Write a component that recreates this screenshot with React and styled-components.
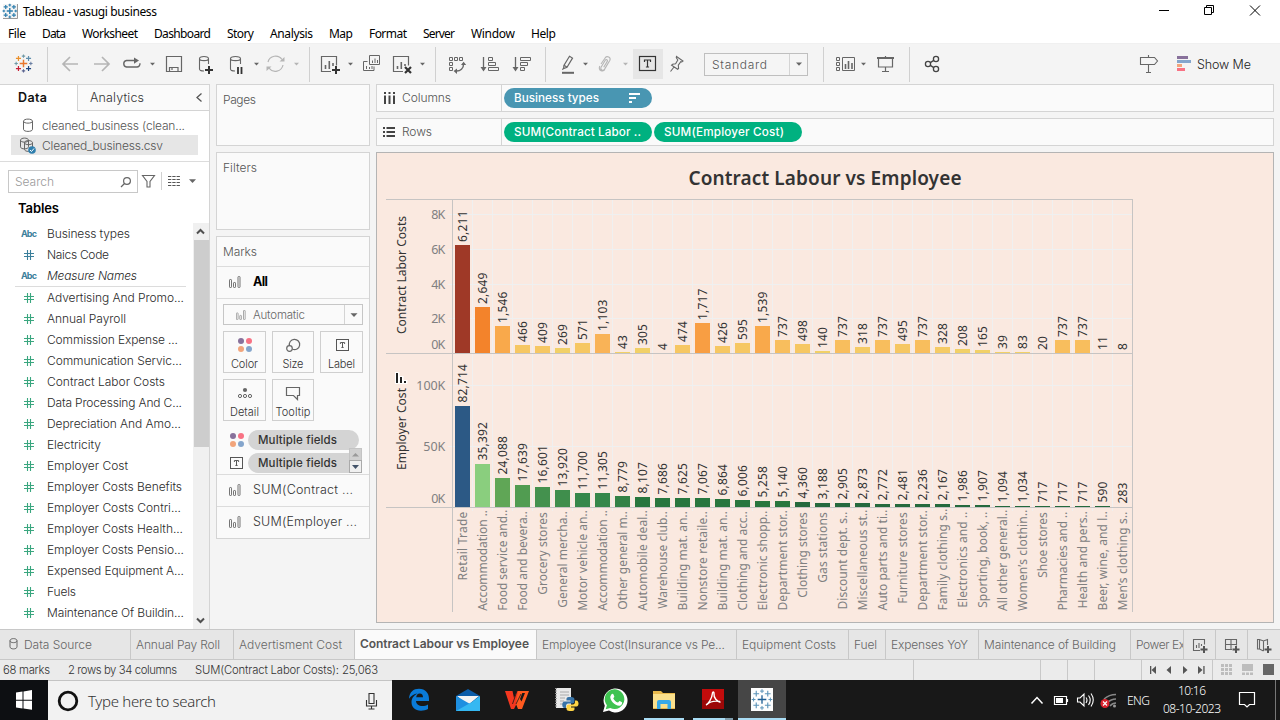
import React, { useLayoutEffect, useRef, useState } from "react";
import styled, { createGlobalStyle, css } from "styled-components";

const UI = `Inter, "Noto Sans", sans-serif`;
const SYS = `"Noto Sans", "Open Sans", sans-serif`;

const Global = createGlobalStyle`
  * { box-sizing: border-box; }
  html, body { margin: 0; padding: 0; overflow: hidden; background: #f4f4f4; }
  body { font-family: ${UI}; font-size: 12px; font-weight: 350; color: #333; }
  svg { display: block; flex: none; }
`;

/* ---------- text that is tracked to a fixed measure ---------- */
const FitSpan = styled.span`
  display: inline-block;
  white-space: pre;
  flex: none;
`;
function Fit({ w, children, ...rest }) {
  const ref = useRef(null);
  const [ls, setLs] = useState(0);
  useLayoutEffect(() => {
    const el = ref.current;
    el.style.letterSpacing = "0px";
    const natural = el.getBoundingClientRect().width;
    const spacing = (w - natural) / Math.max(1, el.textContent.length - 1);
    el.style.letterSpacing = spacing + "px";
    setLs(spacing);
  }, [w]);
  return (
    <FitSpan ref={ref} style={{ letterSpacing: ls + "px", marginRight: -ls + "px" }} {...rest}>
      {children}
    </FitSpan>
  );
}

/* ---------- drawing helpers ---------- */
const Art = ({ x, y, w, h, children }) => (
  <svg width={w} height={h} viewBox={`${x} ${y} ${w} ${h}`} fill="none">
    {children}
  </svg>
);
const Tool = ({ x, w, children }) => (
  <Art x={x} y={46} w={w} h={36}>
    {children}
  </Art>
);
const Caret = ({ x, y = 64, c = "#666", s = 2.5 }) => (
  <path d={`M${x - s} ${y - s / 2}h${2 * s}l${-s} ${s + 0.3}z`} fill={c} />
);
const Plus = ({ x, y, r, c, sw = 1 }) => (
  <path d={`M${x - r} ${y}h${2 * r}M${x} ${y - r}v${2 * r}`} stroke={c} strokeWidth={sw} />
);
const TableauMark = ({ x, y, k = 1, colors, sw = 1.1 }) => {
  const [mid, n, ne, e, se, s, so, w, nw] = colors;
  return (
    <g>
      <Plus x={x} y={y} r={3.6 * k} c={mid} sw={sw * 1.2} />
      <Plus x={x} y={y - 7 * k} r={1.6 * k} c={n} sw={sw * 0.9} />
      <Plus x={x + 4.8 * k} y={y - 4.8 * k} r={2.4 * k} c={ne} sw={sw} />
      <Plus x={x + 7 * k} y={y} r={1.6 * k} c={e} sw={sw * 0.9} />
      <Plus x={x + 4.8 * k} y={y + 4.8 * k} r={2.4 * k} c={se} sw={sw} />
      <Plus x={x} y={y + 7 * k} r={1.6 * k} c={s} sw={sw * 0.9} />
      <Plus x={x - 4.8 * k} y={y + 4.8 * k} r={2.4 * k} c={so} sw={sw} />
      <Plus x={x - 7 * k} y={y} r={1.6 * k} c={w} sw={sw * 0.9} />
      <Plus x={x - 4.8 * k} y={y - 4.8 * k} r={2.4 * k} c={nw} sw={sw} />
    </g>
  );
};
const blues = Array(9).fill("#2f7fae");
const Dots = ({ x, y, d = 8, r = 3 }) => (
  <g>
    <circle cx={x} cy={y} r={r} fill="#88719b" />
    <circle cx={x + d} cy={y} r={r} fill="#f87284" />
    <circle cx={x} cy={y + d} r={r} fill="#f2a57c" />
    <circle cx={x + d} cy={y + d} r={r} fill="#84a5cc" />
  </g>
);
const TBox = ({ x, y, w, h, c = "#555", sw = 1, k = 1 }) => (
  <g stroke={c} strokeWidth={sw}>
    <rect x={x + 0.5} y={y + 0.5} width={w - 1} height={h - 1} />
    <path
      d={`M${x + w / 2 - 3 * k} ${y + h / 2 - 1.5 * k}v${-2 * k}h${6 * k}v${2 * k}M${x + w / 2} ${y + h / 2 - 3.5 * k}v${7 * k}M${x + w / 2 - 1.6 * k} ${y + h / 2 + 3.5 * k}h${3.2 * k}`}
    />
  </g>
);
const BarsGlyph = ({ x = 0, y = 0, c = "#757575" }) => (
  <g stroke={c} fill="none">
    <rect x={x + 0.5} y={y + 3.5} width="2" height="8" rx="0.6" />
    <rect x={x + 4.5} y={y + 6.5} width="2" height="5" rx="0.6" />
    <rect x={x + 9} y={y + 0.5} width="2" height="11" rx="0.6" />
  </g>
);
const Cyl = ({ x, y, w, h, c = "#666" }) => (
  <path
    d={`M${x} ${y + 2.2}c0 -2.8 ${w} -2.8 ${w} 0v${h - 4.4}c0 2.8 ${-w} 2.8 ${-w} 0zM${x} ${y + 2.2}c0 2.6 ${w} 2.6 ${w} 0`}
    stroke={c}
  />
);

/* ---------- window frame ---------- */
const Screen = styled.div`
  width: 1280px;
  height: 720px;
  display: flex;
  flex-direction: column;
  overflow: hidden;
`;
const TitleBar = styled.header`
  height: 24px;
  background: #fff;
  display: flex;
  align-items: center;
  font: 12px/24px ${SYS};
  color: #000;
`;
const WindowButtons = styled.div`
  margin-left: auto;
`;
const MenuBar = styled.nav`
  height: 19px;
  background: #fff;
  display: flex;
  gap: 16px;
  padding-left: 8px;
  font: 12px/19px ${SYS};
  color: #000;
`;
const ToolBar = styled.div`
  height: 41px;
  padding: 2px 0 2px;
  background: #f4f4f4;
  border-top: 1px solid #f0f0f0;
  display: flex;
  align-items: center;
`;
const ToolSep = styled.i`
  width: 1px;
  height: 35px;
  background: #d0d0d0;
  flex: none;
`;
const ActiveTool = styled.div`
  width: 30px;
  height: 30px;
  background: #e6e6e6;
  display: flex;
  align-items: center;
`;
const FitSelect = styled.div`
  width: 104px;
  height: 23px;
  border: 1px solid #bfbfbf;
  display: flex;
  align-items: center;
  padding-left: 7px;
  margin-right: 15px;
  background: #f5f5f5;
  color: #555;
`;
const SelectArrow = styled.span`
  margin-left: auto;
  width: 18px;
  height: 100%;
  border-left: 1px solid #d4d4d4;
  display: flex;
  align-items: center;
  justify-content: center;
`;
const ToolSpace = styled.div`
  flex: 1;
`;
const ShowMe = styled.span`
  width: 83px;
  color: #222;
  font-size: 12.5px;
`;

/* ---------- workspace ---------- */
const Work = styled.div`
  height: 545px;
  display: flex;
  background: #f4f4f4;
`;
const DataPane = styled.aside`
  width: 210px;
  background: #fff;
  border: solid #d4d4d4;
  border-width: 1px 1px 0 0;
  display: flex;
  flex-direction: column;
`;
const PaneTabs = styled.div`
  height: 26px;
  display: flex;
`;
const PaneTab = styled.div`
  display: flex;
  align-items: center;
  font-size: 12.5px;
  ${(p) =>
    p.$active
      ? css`
          width: 77px;
          padding-left: 18px;
          padding-bottom: 1px;
          font-weight: 600;
          color: #111;
        `
      : css`
          flex: 1;
          padding: 0 6px 0 12px;
          justify-content: space-between;
          background: #fafafa;
          border: solid #d4d4d4;
          border-width: 0 0 1px 1px;
          color: #333;
        `}
`;
const Sources = styled.div`
  height: 51px;
  padding: 4px 11px 0;
  border-bottom: 1px solid #dcdcdc;
`;
const Source = styled.div`
  height: 20px;
  display: flex;
  align-items: center;
  gap: 5px;
  padding-left: 8px;
  color: #555;
  background: ${(p) => (p.$on ? "#e6e6e6" : "transparent")};
`;
const SearchRow = styled.div`
  display: flex;
  align-items: center;
  padding: 8px 0 0 8px;
`;
const SearchBox = styled.div`
  width: 130px;
  height: 23px;
  border: 1px solid #c8c8c8;
  display: flex;
  align-items: center;
  justify-content: space-between;
  padding: 0 5px 0 6px;
  color: #9a9a9a;
`;
const TablesHead = styled.div`
  height: 30px;
  padding: 0 0 0 18px;
  display: flex;
  align-items: center;
  font-size: 13px;
  font-weight: 600;
  color: #000;
`;
const FieldArea = styled.div`
  flex: 1;
  display: flex;
  min-height: 0;
`;
const Fields = styled.div`
  flex: 1;
  overflow: hidden;
`;
const Field = styled.div`
  height: 21px;
  display: flex;
  align-items: center;
  padding-bottom: 1px;
  color: #2a2a2a;
  font-style: ${(p) => (p.$italic ? "italic" : "normal")};
`;
const FieldType = styled.span`
  width: 47px;
  padding: 1px 0 0 ${(p) => (p.$abc ? 21 : 24)}px;
  font: 700 9px ${UI};
  color: #3b7f9b;
`;
const FieldRule = styled.div`
  height: 1px;
  margin: 0 7px 0 15px;
  background: #dcdcdc;
`;
const ScrollBar = styled.div`
  width: 16px;
  background: #f0f0f0;
  display: flex;
  flex-direction: column;
  align-items: center;
`;
const Thumb = styled.div`
  width: 15px;
  height: 207px;
  background: #cdcdcd;
`;
const ScrollGap = styled.div`
  flex: 1;
`;

const Cards = styled.section`
  width: 154px;
  margin-left: 6px;
  display: flex;
  flex-direction: column;
  gap: 6px;
`;
const Card = styled.div`
  height: ${(p) => p.$h}px;
  border: 1px solid #d4d4d4;
  background: #fafafa;
  color: #555;
`;
const CardTitle = styled.div`
  padding-left: 6px;
  height: 29px;
  display: flex;
  align-items: center;
`;
const MarkRow = styled.div`
  height: 32px;
  border-top: 1px solid #dcdcdc;
  display: flex;
  align-items: center;
  gap: 12px;
  padding: 0 0 2px 12px;
  font-size: 12.5px;
  font-weight: ${(p) => (p.$bold ? 700 : 350)};
  color: ${(p) => (p.$bold ? "#000" : "#333")};
`;
const MarkBody = styled.div`
  height: 176px;
  border-top: 1px solid #dcdcdc;
  padding: 5px 6px 0;
`;
const MarkType = styled.div`
  width: 140px;
  height: 21px;
  border: 1px solid #c6c6c6;
  display: flex;
  align-items: center;
  gap: 7px;
  padding-left: 12px;
  color: #666;
  font-size: 11.5px;
`;
const MarkGrid = styled.div`
  display: grid;
  grid-template-columns: 43px 42px 43px;
  grid-auto-rows: 42px;
  gap: 6px;
  margin-top: 6px;
`;
const MarkButton = styled.div`
  border: 1px solid #cfcfcf;
  display: flex;
  flex-direction: column;
  align-items: center;
  justify-content: space-between;
  padding: 4px 0 1px;
  font-size: 11px;
  color: #333;
`;
const PillList = styled.div`
  margin-top: 9px;
  display: flex;
  position: relative;
`;
const PillRows = styled.div`
  display: flex;
  flex-direction: column;
  gap: 3px;
`;
const PillRow = styled.div`
  display: flex;
  align-items: center;
`;
const GreyPill = styled.div`
  width: 111px;
  height: 20px;
  border-radius: 10px;
  padding: 0 0 1px 10px;
  background: #d4d4d4;
  color: #333;
  font-size: 11.5px;
  font-weight: 500;
  display: flex;
  align-items: center;
`;
const MiniScroll = styled.div`
  position: absolute;
  right: 0;
  bottom: 0;
`;

const Main = styled.main`
  width: 898px;
  margin-left: 6px;
  display: flex;
  flex-direction: column;
  gap: 6px;
`;
const Shelf = styled.div`
  height: 28px;
  border: 1px solid #d4d4d4;
  background: #fafafa;
  display: flex;
  align-items: center;
`;
const ShelfName = styled.div`
  width: 125px;
  height: 100%;
  border-right: 1px solid #d4d4d4;
  padding: 0 0 1px 6px;
  display: flex;
  align-items: center;
  gap: 6px;
  color: #555;
`;
const Pill = styled.div`
  width: 148px;
  height: 20px;
  margin-left: 2px;
  padding: 0 11px 1px 10px;
  border-radius: 10px;
  display: flex;
  align-items: center;
  justify-content: space-between;
  font-size: 11.7px;
  font-weight: 500;
  color: #fff;
  background: ${(p) => (p.$dim ? "#4996b2" : "#00b180")};
`;
const Sheet = styled.div`
  height: 471px;
  border: 1px solid #b4b4b4;
  background: #fae9e0;
`;

/* ---------- bottom bars ---------- */
const SheetTabs = styled.div`
  height: 31px;
  border: solid #c8c8c8;
  border-width: 1px 0;
  background: #e6e6e6;
  display: flex;
  overflow: hidden;
`;
const SheetTab = styled.div`
  width: ${(p) => p.$w}px;
  flex: none;
  overflow: hidden;
  padding-left: ${(p) => (p.$first ? 6 : 5)}px;
  border-left: ${(p) => (p.$first ? 0 : 1)}px solid #c8c8c8;
  display: flex;
  align-items: center;
  color: #666;
  gap: 5px;
  font-size: 12px;
  ${(p) =>
    p.$active &&
    css`
      background: #fafafa;
      font-weight: 600;
      color: #555;
      padding-bottom: 2px;
    `}
`;
const NewTab = styled.div`
  width: ${(p) => p.$w}px;
  border-left: 1px solid #c8c8c8;
  display: flex;
  align-items: center;
  justify-content: center;
`;
const StatusBar = styled.div`
  height: 20px;
  background: #ebebeb;
  display: flex;
  align-items: center;
  padding-left: 3px;
  gap: 18px;
  font-size: 11.3px;
  color: #333;
`;
const StatusEnd = styled.div`
  margin-left: auto;
  display: flex;
`;
const StatusCell = styled.div`
  width: ${(p) => p.$w}px;
  height: 20px;
  border-left: 1px solid #c8c8c8;
`;

const TaskBar = styled.footer`
  height: 40px;
  background: #181818;
  display: flex;
  font-family: ${SYS};
  color: #fff;
`;
const Start = styled.div`
  width: 48px;
  background: #0d0f12;
`;
const SearchTask = styled.div`
  width: 344px;
  background: #f2f2f2;
  border-top: 1px solid #c4c4c4;
  display: flex;
  align-items: center;
  color: #333;
  font-size: 15px;
`;
const Apps = styled.div`
  display: flex;
  padding-left: 3px;
`;
const AppSlot = styled.div`
  width: 48px;
  height: 40px;
  margin-right: 1px;
  display: flex;
  flex-direction: column;
  align-items: center;
  background: ${(p) => (p.$on ? "#464646" : "transparent")};
`;
const Underline = styled.i`
  display: block;
  width: ${(p) => p.$w}px;
  height: 2px;
  background: #a9dcf4;
  border-right: ${(p) => (p.$dim ? 8 : 0)}px solid #7f9dac;
`;
const Tray = styled.div`
  margin-left: auto;
  display: flex;
  align-items: center;
  font-size: 12px;
`;
const Clock = styled.div`
  width: 76px;
  padding-right: 6px;
  display: flex;
  flex-direction: column;
  align-items: center;
  line-height: 18px;
`;
const Lang = styled.div`
  width: 30px;
`;

/* ---------- data ---------- */
const menus = [
  ["File", 18], ["Data", 24], ["Worksheet", 56], ["Dashboard", 57], ["Story", 27], ["Analysis", 43],
  ["Map", 24], ["Format", 38], ["Server", 32], ["Window", 44], ["Help", 25],
];
const measures = [
  ["Advertising And Promo...", 137], ["Annual Payroll", 79], ["Commission Expense ...", 131],
  ["Communication Servic...", 135], ["Contract Labor Costs", 118], ["Data Processing And C...", 135],
  ["Depreciation And Amo...", 134], ["Electricity", 54], ["Employer Cost", 81],
  ["Employer Costs Benefits", 135], ["Employer Costs Contri...", 134], ["Employer Costs Health...", 136],
  ["Employer Costs Pensio...", 137], ["Expensed Equipment A...", 137], ["Fuels", 29],
  ["Maintenance Of Buildin...", 137],
];
/* label, its top and bottom on the axis, contractor cost, employer cost */
const industries = [
  ["Retail Trade", 511.7, 580, 6211, 82714],
  ["Accommodation ..", 510, 610.3, 2649, 35392],
  ["Food service and..", 509.5, 610.3, 1546, 24088],
  ["Food and bevera..", 511, 610.3, 466, 17639],
  ["Grocery stores", 512.3, 594.3, 409, 16601],
  ["General mercha..", 511, 607.3, 269, 13920],
  ["Motor vehicle an..", 510, 610.3, 571, 11700],
  ["Accommodation ..", 510, 610.3, 1103, 11305],
  ["Other general m..", 511, 609.3, 43, 8779],
  ["Automobile deal..", 510, 610.3, 305, 8107],
  ["Warehouse club..", 511, 608.3, 4, 7686],
  ["Building mat. an..", 511, 610, 474, 7625],
  ["Nonstore retaile..", 511, 610, 1717, 7067],
  ["Building mat. an..", 511, 610, 426, 6864],
  ["Clothing and acc..", 511, 610, 595, 6006],
  ["Electronic shopp..", 510.5, 610, 1539, 5258],
  ["Department stor..", 510, 610, 737, 5140],
  ["Clothing stores", 512.3, 597.3, 498, 4360],
  ["Gas stations", 512.3, 582.3, 140, 3188],
  ["Discount dept. s..", 511.5, 609, 737, 2905],
  ["Miscellaneous st..", 509.5, 610, 318, 2873],
  ["Auto parts and ti..", 509.5, 610, 737, 2772],
  ["Furniture stores", 512.3, 603.3, 495, 2481],
  ["Department stor..", 510, 610, 737, 2236],
  ["Family clothing s..", 508.5, 610, 328, 2167],
  ["Electronics and ..", 511.5, 607.3, 208, 1986],
  ["Sporting, book, ..", 511.5, 607.3, 165, 1907],
  ["All other general..", 509.5, 610.5, 39, 1094],
  ["Women’s clothin..", 509.5, 610.5, 83, 1034],
  ["Shoe stores", 512.3, 577.3, 20, 717],
  ["Pharmacies and ..", 511.5, 610, 737, 717],
  ["Health and pers..", 511, 608, 737, 717],
  ["Beer, wine, and l..", 511, 610, 11, 590],
  ["Men’s clothing s..", 511.5, 610, 8, 283],
];
const warm = (v) =>
  v > 6000 ? "#9f3927" : v > 2000 ? "#f3832b" : v > 1600 ? "#f89e43" : v > 1200 ? "#f9a94b"
  : v > 1000 ? "#f9b357" : v > 700 ? "#f8be5d" : v > 350 ? "#f6c762" : v > 310 ? "#f5cb65" : "#f1d067";
const cool = (v) =>
  v > 80000 ? "#2c5985" : v > 30000 ? "#8ace7e" : v > 20000 ? "#60a656" : v > 17000 ? "#519c51"
  : v > 16000 ? "#44914e" : v > 13000 ? "#3f8e4c" : v > 11000 ? "#35874a" : v > 8500 ? "#338146"
  : v > 5000 ? "#27763e" : "#24693d";

/* ---------- chart ---------- */
const Up = ({ x, y, len, c = "#333", size = 12, children }) => (
  <text
    transform={`translate(${x} ${y}) rotate(-90)`}
    textLength={len}
    fontSize={size}
    fill={c}
  >
    {children}
  </text>
);
const numLen = (s) => s.replace(",", "").length * 7 + (s.includes(",") ? 3.6 : 0) - 0.2;

function Chart() {
  const grid = "#eff0f0";
  const rule = "#c6c4c3";
  return (
    <svg width="896" height="469" viewBox="377 153 896 469" fontFamily={SYS} fontWeight="400">
      <text x="688.5" y="185" textLength="273" fontSize="19" fontWeight="600" fill="#333">
        Contract Labour vs Employee
      </text>
      <g fill={grid}>
        {industries.slice(1).map((_, i) => (
          <rect key={i} x={472 + 20 * i} y="200" width="1" height="311" />
        ))}
        {[214, 249, 284, 318, 385, 446].map((y) => (
          <rect key={y} x="448" y={y} width="684" height="1" />
        ))}
      </g>
      {industries.map(([name, top, bottom, a, b], i) => {
        const ha = Math.round(a * 0.01739);
        const hb = Math.round(b * 0.001222);
        const sa = a.toLocaleString("en-US");
        const sb = b.toLocaleString("en-US");
        const x = 455 + 20 * i;
        return (
          <g key={i}>
            <rect x={x} y={353 - ha} width="15" height={ha} fill={warm(a)} />
            <rect x={x} y={507 - hb} width="15" height={hb} fill={cool(b)} />
            <Up x={x + 12} y={350 - ha} len={numLen(sa)}>{sa}</Up>
            <Up x={x + 12} y={503.5 - hb} len={numLen(sb)}>{sb}</Up>
            <Up x={x + 12} y={bottom + 0.5} len={bottom - top + 0.5} c="#808080">{name}</Up>
          </g>
        );
      })}
      <g fill={rule}>
        <rect x="386" y="199" width="747" height="1" />
        <rect x="386" y="353" width="747" height="1" />
        <rect x="386" y="507" width="747" height="1" />
        <rect x="452" y="199" width="1" height="413" />
        <rect x="1132" y="199" width="1" height="413" />
      </g>
      <Up x={406} y={334} len={118}>Contract Labor Costs</Up>
      <Up x={406} y={470} len={82}>Employer Cost</Up>
      <path d="M395 372h4.500v4h4v4h4v4h-12.500z" fill="#fff" />
      <path d="M396 373h2v10h-2zM400 377h2v6h-2zM404 381h2v2h-2z" fill="#222" />
      <g fill="#808080" fontSize="12.5" textAnchor="end">
        {[["8K", 218.5, 14], ["6K", 253.5, 14], ["4K", 288.5, 14], ["2K", 322.5, 14], ["0K", 349, 14],
          ["100K", 390, 29], ["50K", 451, 22], ["0K", 503, 14]].map(([t, y, l]) => (
          <text key={y} x="445.3" y={y} textLength={l}>{t}</text>
        ))}
      </g>
    </svg>
  );
}

/* ---------- sections ---------- */
function Tools() {
  const g = "#666";
  const l = "#b5b5b5";
  return (
    <ToolBar>
      <Tool x={0} w={47}>
        <TableauMark x={23.5} y={63.5} k={1.05} sw={1.2}
          colors={["#e8762d", "#7099a6", "#5f8fae", "#6a7fa3", "#1f447e", "#5b6591", "#c72037", "#7099a6", "#eb912c"]} />
      </Tool>
      <ToolSep />
      <Tool x={48} w={38}><path d="M78 64h-15M70 57l-7 7 7 7" stroke={l} strokeWidth="1.7" /></Tool>
      <Tool x={86} w={30}><path d="M94 64h15M102 57l7 7 -7 7" stroke={l} strokeWidth="1.7" /></Tool>
      <Tool x={116} w={42}>
        <path d="M134 60.5h-7.500a3.300 3.300 0 0 0 0 6.500h10a3 3 0 0 0 3.300 -3.800" stroke={g} strokeWidth="1.4" />
        <path d="M134 57.500l5 3 -5 3.200z" fill={g} />
        <Caret x={152.5} />
      </Tool>
      <Tool x={158} w={32}>
        <path d="M166.500 56.500h15v15h-15zM169.500 71.500v-4h8.500v4M172 70v-2" stroke={g} strokeWidth="1.2" />
      </Tool>
      <Tool x={190} w={32}>
        <path d="M208.500 64v-5.300c0-3-9-3-9 0v10.300c0 1.400 2 2 4.500 2M199.500 58.700c0 2.600 9 2.600 9 0" stroke={g} strokeWidth="1.1" />
        <Plus x={209} y={70} r={4} c="#333" sw={2} />
      </Tool>
      <Tool x={222} w={42}>
        <path d="M240.500 64v-5.300c0-3-10-3-10 0v10.300c0 1.400 2 2 4.500 2M230.500 58.700c0 2.600 10 2.600 10 0" stroke={g} strokeWidth="1.1" />
        <path d="M238 67v7M241.500 67v7" stroke="#333" strokeWidth="1.8" />
        <Caret x={256.5} />
      </Tool>
      <Tool x={264} w={45}>
        <path d="M268 62a7.800 7.800 0 0 1 14-2.500M283 65a7.800 7.800 0 0 1 -14 3" stroke={l} strokeWidth="1.2" />
        <path d="M284.500 57v4.500h-5zM266.500 71v-4.500h5z" fill={l} />
        <Caret x={296.5} c={l} />
      </Tool>
      <ToolSep />
      <Tool x={310} w={48}>
        <path d="M331 71.500h-9.500v-15h15v9" stroke={g} strokeWidth="1.2" />
        <path d="M325.500 69v-4M329.300 69v-8M333 66v-3" stroke={g} strokeWidth="1.6" />
        <Plus x={336} y={70} r={4} c="#333" sw={2} />
        <Caret x={350.500} />
      </Tool>
      <Tool x={358} w={28}>
        <path d="M369.500 55.500h10v9h-10zM367.500 61.500h-4v9h10.500v-4M366.500 69v-3M369.500 69v-2M372 69v-3M372.500 63v-2.500M375 63v-4.500M377.500 63v-3" stroke={g} />
      </Tool>
      <Tool x={386} w={49}>
        <path d="M403 71.500h-9.500v-15h15v9" stroke={g} strokeWidth="1.2" />
        <path d="M397.500 69v-3M401.300 69v-7M405 66v-2" stroke={g} strokeWidth="1.6" />
        <path d="M405 67l6 6M411 67l-6 6" stroke="#333" strokeWidth="2.200" />
        <Caret x={422.500} />
      </Tool>
      <ToolSep />
      <Tool x={436} w={38}>
        <path d="M449.500 57.500h3v3h-3zM454.500 57.500h3v3h-3zM459.500 57.500h3v3h-3zM449.500 62.500h3v3h-3zM449.500 67.500h3v3h-3z" stroke={g} />
        <path d="M463.500 63.500c.3 5-3 8-8 7.500" stroke={g} strokeWidth="1.400" />
        <path d="M461 65l2.600-3.300 2.600 3.300zM457 68.500l-3.400 2.500 3.400 3z" fill={g} />
      </Tool>
      <Tool x={474} w={32}>
        <path d="M483.500 57v12" stroke={g} strokeWidth="1.300" />
        <path d="M480.500 67h6l-3 4.500z" fill={g} />
        <path d="M488.500 57.500h4v3h-4zM488.500 62.500h7v3h-7zM488.500 67.500h10v3h-10z" stroke={g} />
      </Tool>
      <Tool x={506} w={39}>
        <path d="M515.500 57v12" stroke={g} strokeWidth="1.300" />
        <path d="M512.500 67h6l-3 4.500z" fill={g} />
        <path d="M520.500 57.500h10v3h-10zM520.500 62.500h7v3h-7zM520.500 67.500h4v3h-4z" stroke={g} />
      </Tool>
      <ToolSep />
      <Tool x={546} w={47}>
        <path d="M569.500 56.300l3 1.800 -5.500 9.200 -3.400 1.300 .3-3.200zM564.100 65.200l3 2M563.500 68.500l-1.200 1.200" stroke={g} strokeWidth="1.200" />
        <path d="M562 72.800h12" stroke={g} strokeWidth="2" />
        <Caret x={585.5} />
      </Tool>
      <Tool x={593} w={40}>
        <path d="M601 64l4.300-6.300c1.800-2.400 5.800-.2 4.600 2.600l-5.300 8.800c-1.500 2.200-4.600.600-3.700-1.700l4.400-7.200c1-1.300 2.700-.3 2 1.200l-3.600 5.800M599.800 66c-1 1.800-.5 4 1.300 4.700 1.600.600 3 .1 3.800-1.200" stroke={l} strokeWidth="1.100" />
        <Caret x={625.500} c={l} />
      </Tool>
      <ActiveTool>
        <Tool x={633} w={30}><TBox x={639} y={56} w={17} h={15} c="#333" sw={1.200} k={1} /></Tool>
      </ActiveTool>
      <Tool x={663} w={41}>
        <path d="M676.500 56.500l6.500 4.500 -1.200 1 -1-.3 -2.500 3.500 .300 3.300 -1 .8 -6-4.200 1-.8 3 -.5 2.200-3.800 -1.500-2.300zM674 67l-3.500 4.500" stroke={g} strokeWidth="1.100" />
      </Tool>
      <FitSelect>
        <Fit w={55}>Standard</Fit>
        <SelectArrow><Art x={0} y={0} w={10} h={8}><Caret x={5} y={4} s={3} /></Art></SelectArrow>
      </FitSelect>
      <ToolSep />
      <Tool x={824} w={46}>
        <path d="M836.500 57.500h3v3h-3zM836.500 62.500h3v3h-3zM836.500 67.500h3v3h-3zM842.500 57.500h12v13h-12z" stroke={g} />
        <path d="M845.500 69v-5M848.500 69v-8M852 69v-6" stroke={g} strokeWidth="1.600" />
        <Caret x={863.500} />
      </Tool>
      <Tool x={870} w={39}>
        <path d="M877 58h17" stroke={g} strokeWidth="2" />
        <path d="M885.500 56v2M878.500 58.500v8.500h14v-8.500M885.500 67v4.500M882 71.500h7" stroke={g} strokeWidth="1.200" />
      </Tool>
      <ToolSep />
      <Tool x={910} w={40}>
        <g stroke="#444" strokeWidth="1.300">
          <circle cx="928" cy="64" r="2.600" /><circle cx="936" cy="59" r="2.600" /><circle cx="936" cy="69" r="2.600" />
          <path d="M930.300 62.600l3.500-2.200M930.300 65.400l3.500 2.200" />
        </g>
      </Tool>
      <ToolSpace />
      <Tool x={1130} w={38}>
        <path d="M1140.500 57.500h14l3 3.500 -3 3.500h-14zM1148.500 55v2.500M1148.500 64.500v7.500M1146 72.500h5" stroke={g} strokeWidth="1.100" />
      </Tool>
      <Tool x={1168} w={29}>
        <path d="M1177 56h11v3h-11z" fill="#88719b" /><path d="M1177 60h14v3h-14z" fill="#84a5cc" />
        <path d="M1177 64h5v3h-5z" fill="#f2a57c" /><path d="M1177 68h8v3h-8z" fill="#f87284" />
      </Tool>
      <ShowMe><Fit w={54}>Show Me</Fit></ShowMe>
    </ToolBar>
  );
}

const Hash = ({ c }) => (
  <svg width="10" height="10" fill="none" stroke={c} strokeWidth="1.100">
    <path d="M0 3.500h10M0 6.500h10M3.500 0v10M6.500 0v10" />
  </svg>
);

function DataSide() {
  return (
    <DataPane>
      <PaneTabs>
        <PaneTab $active><Fit w={29}>Data</Fit></PaneTab>
        <PaneTab>
          <Fit w={54}>Analytics</Fit>
          <svg width="8" height="10" fill="none" stroke="#555" strokeWidth="1.300"><path d="M6.500 0.500L2 4.500l4.500 4" /></svg>
        </PaneTab>
      </PaneTabs>
      <Sources>
        <Source>
          <Art x={0} y={0} w={18} h={16}><Cyl x={4.5} y={2} w={9} h={12.500} /></Art>
          <Fit w={143}>cleaned_business (clean...</Fit>
        </Source>
        <Source $on>
          <Art x={0} y={0} w={18} h={18}>
            <Cyl x={1.500} y={2} w={8} h={11} /><Cyl x={5.500} y={4.500} w={8} h={11} />
            <circle cx="13" cy="14" r="3.800" fill="#2f7fae" /><path d="M11 14l1.500 1.500 2.500-3" stroke="#fff" />
          </Art>
          <Fit w={121}>Cleaned_business.csv</Fit>
        </Source>
      </Sources>
      <SearchRow>
        <SearchBox>
          <Fit w={39}>Search</Fit>
          <svg width="12" height="12" fill="none" stroke="#666" strokeWidth="1.200"><circle cx="7" cy="5" r="3.400" /><path d="M4.500 7.500L1 11" /></svg>
        </SearchBox>
        <Art x={138} y={170} w={70} h={23}>
          <path d="M142.500 175.500h12l-4.500 6v5.500h-3v-5.500z" stroke="#666" strokeWidth="1.100" />
          <path d="M161.500 172v18" stroke="#d0d0d0" />
          <path d="M168 176.500h12M168 179.500h12M168 182.500h12M168 185.500h12" stroke="#555" strokeWidth="1.200" strokeDasharray="3.300 1" />
          <Caret x={192.500} y={181} s={3.500} />
        </Art>
      </SearchRow>
      <TablesHead><Fit w={41}>Tables</Fit></TablesHead>
      <FieldArea>
        <Fields>
          <Field><FieldType $abc><Fit w={16}>Abc</Fit></FieldType><Fit w={83}>Business types</Fit></Field>
          <Field><FieldType><Hash c="#3b7f9b" /></FieldType><Fit w={62}>Naics Code</Fit></Field>
          <Field $italic><FieldType $abc><Fit w={16}>Abc</Fit></FieldType><Fit w={90}>Measure Names</Fit></Field>
          <FieldRule />
          {measures.map(([t, w]) => (
            <Field key={t}><FieldType><Hash c="#3aa67f" /></FieldType><Fit w={w}>{t}</Fit></Field>
          ))}
        </Fields>
        <ScrollBar>
          <svg width="16" height="17" fill="none" stroke="#505050" strokeWidth="2"><path d="M4 10.500l3.500-3.500 3.500 3.500" /></svg>
          <Thumb />
          <ScrollGap />
          <svg width="16" height="17" fill="none" stroke="#505050" strokeWidth="2"><path d="M4 6.500l3.500 3.500 3.500-3.500" /></svg>
        </ScrollBar>
      </FieldArea>
    </DataPane>
  );
}

function MarksColumn() {
  return (
    <Cards>
      <Card $h={62}><CardTitle><Fit w={33}>Pages</Fit></CardTitle></Card>
      <Card $h={78}><CardTitle><Fit w={34}>Filters</Fit></CardTitle></Card>
      <Card $h={303}>
        <CardTitle><Fit w={34}>Marks</Fit></CardTitle>
        <MarkRow $bold><svg width="12" height="12"><BarsGlyph /></svg><Fit w={15}>All</Fit></MarkRow>
        <MarkBody>
          <MarkType>
            <svg width="10" height="10" viewBox="0 0 12 12"><BarsGlyph c="#999" /></svg>
            <Fit w={52}>Automatic</Fit>
            <SelectArrow><Art x={0} y={0} w={10} h={8}><Caret x={5} y={4} s={3.500} /></Art></SelectArrow>
          </MarkType>
          <MarkGrid>
            <MarkButton>
              <Art x={0} y={0} w={18} h={18}><Dots x={5} y={5} /></Art><Fit w={27}>Color</Fit>
            </MarkButton>
            <MarkButton>
              <Art x={0} y={0} w={18} h={18}><path d="M5.500 10a5.200 5.200 0 1 1 3 3.300" stroke="#666" strokeWidth="1.200" /><circle cx="5.500" cy="12.500" r="2.800" stroke="#666" strokeWidth="1.200" /></Art>
              <Fit w={21}>Size</Fit>
            </MarkButton>
            <MarkButton>
              <Art x={0} y={0} w={18} h={18}><TBox x={3} y={3} w={13} h={12} k={0.700} /></Art><Fit w={27}>Label</Fit>
            </MarkButton>
            <MarkButton>
              <Art x={0} y={0} w={18} h={18}>
                <circle cx="9" cy="6" r="2.100" fill="#666" />
                <g stroke="#666"><circle cx="4" cy="12" r="1.600" /><circle cx="9" cy="12" r="1.600" /><circle cx="14" cy="12" r="1.600" /></g>
              </Art>
              <Fit w={29}>Detail</Fit>
            </MarkButton>
            <MarkButton>
              <Art x={0} y={0} w={18} h={18}><path d="M2.500 3.500h13v8h-2v4l-4-4h-7z" stroke="#666" strokeWidth="1.200" /></Art>
              <Fit w={35}>Tooltip</Fit>
            </MarkButton>
          </MarkGrid>
          <PillList>
            <PillRows>
              <PillRow><Art x={0} y={0} w={25} h={20}><Dots x={10} y={6} /></Art><GreyPill><Fit w={79}>Multiple fields</Fit></GreyPill></PillRow>
              <PillRow><Art x={0} y={0} w={25} h={20}><TBox x={7} y={4} w={13} h={12} k={0.700} /></Art><GreyPill><Fit w={79}>Multiple fields</Fit></GreyPill></PillRow>
            </PillRows>
            <MiniScroll>
              <svg width="14" height="25">
                <rect x="0.500" y="0.500" width="12" height="12" fill="#d0d0d0" stroke="#c4c4c4" /><rect x="0.500" y="12.500" width="12" height="12" fill="#f0f0f0" stroke="#aaa" />
                <path d="M3 8.500h7L6.500 5z" fill="#999" /><path d="M3 17h7l-3.500 4z" fill="#44546a" />
              </svg>
            </MiniScroll>
          </PillList>
        </MarkBody>
        <MarkRow><svg width="12" height="12"><BarsGlyph /></svg><Fit w={100}>SUM(Contract ...</Fit></MarkRow>
        <MarkRow><svg width="12" height="12"><BarsGlyph /></svg><Fit w={104}>SUM(Employer ...</Fit></MarkRow>
      </Card>
    </Cards>
  );
}

function Canvas() {
  return (
    <Main>
      <Shelf>
        <ShelfName>
          <svg width="13" height="12" fill="#444"><path d="M1 0h2v2H1zM5.500 0h2v2h-2zM10 0h2v2h-2zM1 3.500h2V12H1zM5.500 3.500h2V12h-2zM10 3.500h2V12h-2z" /></svg>
          <Fit w={49}>Columns</Fit>
        </ShelfName>
        <Pill $dim>
          <Fit w={85}>Business types</Fit>
          <svg width="18" height="10" fill="#fff"><path d="M7 0h11v2H7zM7 4h7v2H7zM7 8h3v2H7z" transform="translate(-1 0)" /></svg>
        </Pill>
      </Shelf>
      <Shelf>
        <ShelfName>
          <svg width="13" height="10" fill="#444"><path d="M0 0h2v2H0zM0 4h2v2H0zM0 8h2v2H0zM3.500 0H12v2H3.500zM3.500 4H12v2H3.500zM3.500 8H12v2H3.500z" /></svg>
          <Fit w={30}>Rows</Fit>
        </ShelfName>
        <Pill><Fit w={127}>SUM(Contract Labor ..</Fit></Pill>
        <Pill><Fit w={120}>SUM(Employer Cost)</Fit></Pill>
      </Shelf>
      <Sheet><Chart /></Sheet>
    </Main>
  );
}

const tabs = [
  ["Annual Pay Roll", 103, 84], ["Advertisment Cost", 121, 103], ["Contract Labour vs Employee", 182, 169],
  ["Employee Cost(Insurance vs Pe...", 200, 183], ["Equipment Costs", 112, 94], ["Fuel", 37, 23],
  ["Expenses YoY", 93, 77], ["Maintenance of Building", 152, 132], ["Power Exp", 53, 56],
];

const Python = () => (
  <g>
    <path d="M4 1h15v20H4z" fill="#e9e9e9" /><path d="M4 1v20" stroke="#999" strokeDasharray="1 1.500" strokeWidth="2" />
    <path d="M8 5h9M8 8h9M8 11h5M8 14h4M8 17h3" stroke="#aaa" />
    <path d="M18 10c-4 0-3.500 1.500-3.500 3.500h4v1h-6c-3 0-3 6.500 0 6.500h1.500v-2c0-2 1.500-2.500 3-2.500h3.500c1.500 0 2-1 2-2.500 0-3 0-4-4.500-4z" fill="#3873a6" />
    <path d="M19 24c4 0 3.500-1.500 3.500-3.500h-4v-1h6c3 0 2.500-6 0-6h-1.500v1.500c0 2-1.500 2.500-3 2.500h-3.500c-1.500 0-2 1-2 2.500 0 3 0 4 4.500 4z" fill="#ffd545" />
  </g>
);

function Taskbar() {
  return (
    <TaskBar>
      <Start>
        <Art x={0} y={680} w={48} h={40}>
          <path d="M16 692.300l6.500-1v8.200h-6.500zM23.500 691.100l8.500-1.300v9.700h-8.500zM16 700.500h6.500v7.700l-6.500-1zM23.500 700.500h8.500v9l-8.500-1.300z" transform="translate(0 .3)" fill="#fff" />
        </Art>
      </Start>
      <SearchTask>
        <Art x={48} y={681} w={40} h={38}><circle cx="68" cy="700" r="8.800" stroke="#111" strokeWidth="2.800" /></Art>
        <Fit w={128}>Type here to search</Fit>
        <ScrollGap />
        <Art x={352} y={681} w={40} h={38}>
          <path d="M369 692.500h5v10h-5zM366.500 699v6h10v-6M371.500 705v3M368.500 708h6" stroke="#333" strokeWidth="1.100" />
        </Art>
      </SearchTask>
      <Apps>
        <AppSlot>
          <Art x={0} y={0} w={28} h={38}>
            <path d="M4 19.500C4.500 12.500 8.500 9.500 14 9.500c6.500 0 10 4.500 10 10v2.300H11c.2 3.500 3 5 6.300 5 2.200 0 4-.6 5.700-1.600v4.600c-2 1.200-4.500 1.700-7 1.700C10 31.500 6.500 27.500 6.500 23c0-4.200 2.500-7.200 6-8.800-3.500.3-6.500 2.300-8.500 5.300zM11.200 18h6.800c0-2.200-1-3.800-3.300-3.800-2 0-3.200 1.700-3.500 3.800z" transform="translate(0 -.7)" fill="#0a7bd8" fillRule="evenodd" />
          </Art>
        </AppSlot>
        <AppSlot>
          <Art x={0} y={0} w={24} h={38}>
            <path d="M0 16L12 9l12 7v14H0z" fill="#0b5ca8" /><path d="M1 16h22l-11 9z" fill="#f3f3f3" />
            <path d="M0 16l15 8.500L10 31H0z" fill="#1e8fe0" /><path d="M24 16v15H0L16 22z" fill="#35b8f2" />
          </Art>
        </AppSlot>
        <AppSlot>
          <Art x={0} y={0} w={24} h={38}>
            <path d="M0 11h7.500l1.500 7 3-7h6l-9 18H6z" fill="#f4371f" /><path d="M13 11h5l-3 8 1.500 2.500L20 13h-3.500V11H24l-7 18h-4l-2-5z" fill="#ff5a1f" />
            <path d="M12 11L7.500 24M16 14l-5 10" stroke="#181818" strokeWidth="0.800" />
          </Art>
        </AppSlot>
        <AppSlot><Art x={0} y={-7} w={28} h={38}><Python /></Art></AppSlot>
        <AppSlot>
          <Art x={0} y={0} w={26} h={38}>
            <path d="M1 32l1.800-6.200A12 12 0 1 1 7 30.500z" fill="#fff" /><path d="M3.700 29.300l1.200-4A9.800 9.800 0 1 1 8.300 28z" fill="#3fc351" />
            <path d="M9.300 14.500c.8-1 1.800-.9 2.200 0l.8 2c.2.600-.9 1.500-1 1.900 1 2 2.500 3.300 4.600 4.200.600-.2 1.200-1.700 1.800-1.500l2.300 1.200c.4.300.1 3-2.300 3.500C13.500 26.500 7.500 20 8.300 16.500z" fill="#fff" />
          </Art>
        </AppSlot>
        <AppSlot>
          <Art x={0} y={0} w={24} h={38}>
            <path d="M1 11h8l2 2h12v16H1z" fill="#e9b94c" /><path d="M1 14h22v14H1z" fill="#fbe08c" />
            <path d="M5 29v-7q0-2 2-2h10q2 0 2 2v7h-3.500v-5h-7v5z" fill="#38a9e8" />
          </Art>
          <Underline $w={40} />
        </AppSlot>
        <AppSlot>
          <Art x={0} y={0} w={22} h={38}>
            <path d="M0 9h22v20H0z" fill="#c30c0c" /><path d="M0 20h22v9H0z" fill="#9c0808" />
            <path d="M4 25c2-1 6-6 6.500-12 .100-1.500 1.700-1.500 1.500.5C11.500 18 15 21.500 18.500 22.300M5 24.500c3-3 8-3.800 13-3" stroke="#fff" strokeWidth="1.400" />
          </Art>
          <Underline $w={40} $dim />
        </AppSlot>
        <AppSlot $on>
          <Art x={0} y={0} w={24} h={38}>
            <path d="M1 8h22v23H1z" fill="#fdfdfd" /><TableauMark x={12} y={19.500} k={1.200} colors={["#1f5f95", ...Array(8).fill("#5b93b8")]} />
          </Art>
          <Underline $w={48} />
        </AppSlot>
      </Apps>
      <Tray>
        <Art x={1025} y={680} w={102} h={40}>
          <path d="M1031.500 703.500l5.500-6 5.500 6" stroke="#fff" strokeWidth="1.500" />
          <path d="M1054.500 696.500h12v8h-12zM1067.500 699v3" stroke="#fff" strokeWidth="1.200" /><path d="M1056 698h7v5h-7z" fill="#fff" />
          <path d="M1077.500 698h2.500l4-4v12l-4-4h-2.500zM1086 697.500q2 2.500 0 5.500M1088.500 695.500q3.500 4.500 0 9.500M1091 693.500q4.500 6.500 0 13" stroke="#fff" strokeWidth="1.100" />
          <path d="M1104 699q5-4.500 12-4.500M1107 703q4-4 9-4M1110 706q2.500-3 6-3" stroke="#888" strokeWidth="1.400" />
          <circle cx="1114.500" cy="706" r="1.500" fill="#999" />
          <circle cx="1105" cy="703.500" r="4.500" fill="#d9232e" /><path d="M1103 701.500l4 4M1107 701.500l-4 4" stroke="#fff" strokeWidth="1.100" />
        </Art>
        <Lang><Fit w={23}>ENG</Fit></Lang>
        <Clock><Fit w={28}>10:16</Fit><Fit w={58}>08-10-2023</Fit></Clock>
        <Art x={1233} y={680} w={47} h={40}>
          <path d="M1239.500 692.500h15v12h-5l-2.500 2.500 -2.500-2.500h-5z" stroke="#fff" strokeWidth="1.200" />
          <path d="M1275.500 680v40" stroke="#777" />
        </Art>
      </Tray>
    </TaskBar>
  );
}

export default function App() {
  return (
    <Screen>
      <Global />
      <TitleBar>
        <Art x={0} y={0} w={23} h={24}>
          <path d="M3 4h15v15H3z" fill="#f4f4f4" /><path d="M3 18.500h14.500V4" stroke="#999" />
          <TableauMark x={9.800} y={11} k={0.850} sw={1.200} colors={blues} />
        </Art>
        <Fit w={134}>Tableau - vasugi business</Fit>
        <WindowButtons>
          <Art x={1150} y={0} w={130} h={24}>
            <path d="M1159 10.500h10M1204.500 7.500h7v7h-7zM1206.500 7.500v-2h7v7h-2M1250 5.500l10 10M1260 5.500l-10 10" stroke="#000" />
          </Art>
        </WindowButtons>
      </TitleBar>
      <MenuBar>{menus.map(([t, w]) => <Fit key={t} w={w}>{t}</Fit>)}</MenuBar>
      <Tools />
      <Work>
        <DataSide />
        <MarksColumn />
        <Canvas />
      </Work>
      <SheetTabs>
        <SheetTab $first $w={130}>
          <Art x={0} y={0} w={13} h={14}><Cyl x={4} y={0.500} w={7} h={10.500} /></Art>
          <Fit w={68}>Data Source</Fit>
        </SheetTab>
        {tabs.map(([t, w, tw]) => (
          <SheetTab key={t} $w={w} $active={t.startsWith("Contract")}><Fit w={tw}>{t}</Fit></SheetTab>
        ))}
        <NewTab $w={32}>
          <Art x={0} y={0} w={18} h={18}><path d="M9 14.500H2.500v-11h11v5M5.500 12V9M8 12V7M10.500 10V8" stroke="#666" strokeWidth="1.100" /><Plus x={13} y={13.500} r={3.500} c="#555" sw={2} /></Art>
        </NewTab>
        <NewTab $w={32}>
          <Art x={0} y={0} w={18} h={18}><path d="M9 13.500H2.500v-10h11v6M2.500 8.500h11M8 3.500v10" stroke="#666" strokeWidth="1.100" /><Plus x={13} y={13.500} r={3.500} c="#555" sw={2} /></Art>
        </NewTab>
        <NewTab $w={33}>
          <Art x={0} y={0} w={18} h={18}><path d="M12.500 9V3.500l-4 1.500 -4-1.500h-2v9.500h2l4 2M8.500 5v10M4.500 3.500v9.500M12.500 3.500" stroke="#666" strokeWidth="1.100" /><Plus x={13} y={13.500} r={3.500} c="#555" sw={2} /></Art>
        </NewTab>
      </SheetTabs>
      <StatusBar>
        <Fit w={47}>68 marks</Fit>
        <Fit w={109}>2 rows by 34 columns</Fit>
        <Fit w={183}>SUM(Contract Labor Costs): 25,063</Fit>
        <StatusEnd>
          <StatusCell $w={127} /><StatusCell $w={27} /><StatusCell $w={27} /><StatusCell $w={47} />
          <StatusCell $w={71}>
            <Art x={1142} y={660} w={70} h={20}>
              <path d="M1150 666h1.300v8h-1.300zM1156 666v8l-4.500-4zM1171 666v8l-4.500-4zM1183 666v8l4.500-4zM1198 666v8l4.500-4zM1203.300 666h1.300v8h-1.300z" fill="#555" />
            </Art>
          </StatusCell>
          <StatusCell $w={68}>
            <Art x={1213} y={660} w={67} h={20}>
              {[1221, 1225, 1229].map((x) => [664, 668, 672].map((y) => <rect key={x + "-" + y} x={x} y={y} width="3" height="3" fill="#bdbdbd" />))}
              <path d="M1242 664h11v7h-11zM1242 672.500h3v2.500h-3zM1246 672.500h3v2.500h-3zM1250 672.500h3v2.500h-3z" fill="#bdbdbd" />
              <path d="M1263 664h11v11h-11z" fill="#666" />
            </Art>
          </StatusCell>
        </StatusEnd>
      </StatusBar>
      <Taskbar />
    </Screen>
  );
}
